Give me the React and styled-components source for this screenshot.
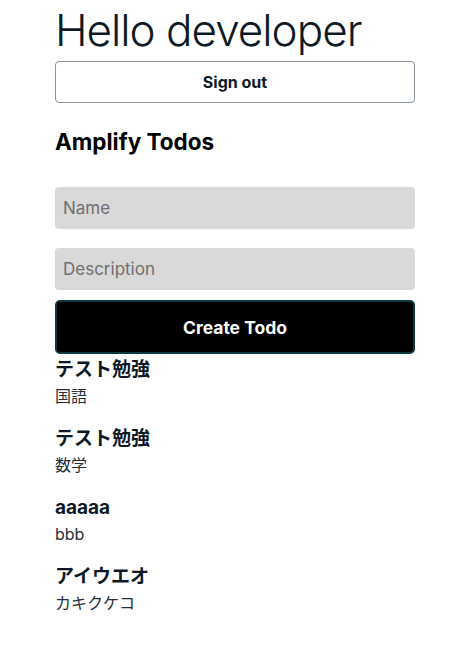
import React, { useState } from 'react';
import styled, { createGlobalStyle } from 'styled-components';

const GlobalStyle = createGlobalStyle`
    body {
        margin: 0;
        background: #ffffff;
        font-family: Inter, "Noto Sans CJK JP", sans-serif;
        color: #0d1a26;
    }
`;

const initialTodos = [
    { id: 1, name: 'テスト勉強', description: '国語' },
    { id: 2, name: 'テスト勉強', description: '数学' },
    { id: 3, name: 'aaaaa', description: 'bbb' },
    { id: 4, name: 'アイウエオ', description: 'カキクケコ' },
];

const App = () => {
    const [todos, setTodos] = useState(initialTodos);
    const [name, setName] = useState('');
    const [description, setDescription] = useState('');

    // 入力値からtodoを追加
    const addTodo = () => {
        if (!name) return;
        setTodos([...todos, { id: Date.now(), name, description }]);
        setName('');
        setDescription('');
    };

    return (
        <React.Fragment>
            <GlobalStyle />
            <Page>
                <Greeting>Hello developer</Greeting>
                <SignOutButton>Sign out</SignOutButton>
                <Title>Amplify Todos</Title>
                <Form>
                    <Field
                        placeholder="Name"
                        value={name}
                        onChange={(e) => setName(e.target.value)}
                    />
                    <Field
                        placeholder="Description"
                        value={description}
                        onChange={(e) => setDescription(e.target.value)}
                    />
                </Form>
                <CreateButton onClick={addTodo}>Create Todo</CreateButton>
                <TodoList>
                    {todos.map((todo) => (
                        <TodoItem key={todo.id}>
                            <TodoName>{todo.name}</TodoName>
                            <TodoDescription>{todo.description}</TodoDescription>
                        </TodoItem>
                    ))}
                </TodoList>
            </Page>
        </React.Fragment>
    );
};

const Page = styled.div`
    width: 360px;
    margin-left: 55px;
    display: flex;
    flex-direction: column;
`;

const Greeting = styled.h1`
    margin: 0;
    font-size: 44px;
    font-weight: 300;
    line-height: 61px;
    letter-spacing: -1px;
    color: #0d1a26;
`;

const SignOutButton = styled.button`
    height: 42px;
    border: 1px solid #89949f;
    border-radius: 4px;
    background: #ffffff;
    font-family: Inter, sans-serif;
    font-size: 16px;
    font-weight: 700;
    color: #0d1a26;
    cursor: pointer;
`;

const Title = styled.h2`
    margin: 25px 0 0;
    font-size: 22.5px;
    font-weight: 700;
    line-height: 28px;
    color: #000000;
`;

const Form = styled.div`
    display: flex;
    flex-direction: column;
    gap: 19px;
    margin-top: 31px;
`;

const Field = styled.input`
    height: 42px;
    padding: 0 8px;
    border: none;
    border-radius: 4px;
    background: #d9d9d9;
    font-family: Inter, sans-serif;
    font-size: 17px;
    color: #0d1a26;
    outline: none;

    &::placeholder {
        color: #6f6f6f;
    }
`;

const CreateButton = styled.button`
    margin-top: 10px;
    height: 54px;
    border: 2px solid #0d3a40;
    border-radius: 5px;
    background: #000000;
    font-family: Inter, sans-serif;
    font-size: 17.5px;
    font-weight: 700;
    color: #ffffff;
    cursor: pointer;
`;

const TodoList = styled.div`
    display: flex;
    flex-direction: column;
    gap: 16px;
    margin-top: 3px;
`;

const TodoItem = styled.div`
    display: flex;
    flex-direction: column;
`;

const TodoName = styled.div`
    font-size: 19px;
    font-weight: 700;
    line-height: 26px;
    color: #0d1a26;
`;

const TodoDescription = styled.div`
    font-size: 16px;
    line-height: 27px;
    color: #26303a;
`;

export default App;
